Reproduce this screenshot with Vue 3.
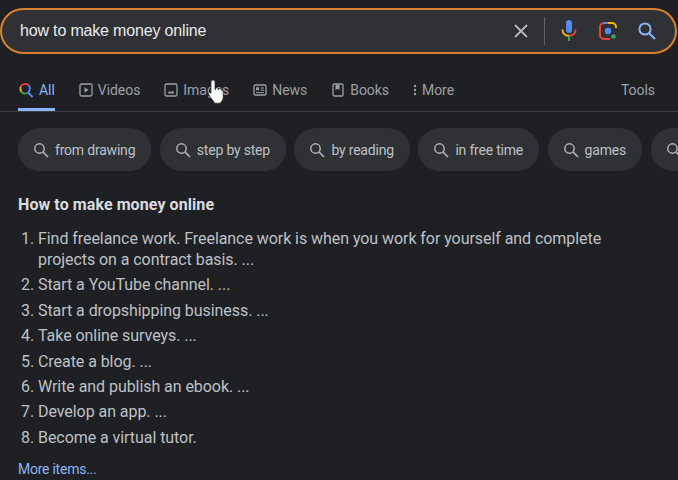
<script setup>
const tabs = [
  { label: 'Videos', icon: 'video' },
  { label: 'Images', icon: 'image' },
  { label: 'News', icon: 'news' },
  { label: 'Books', icon: 'book' }
]
const chips = ['from drawing', 'step by step', 'by reading', 'in free time', 'games']
const items = [
  'Find freelance work. Freelance work is when you work for yourself and complete projects on a contract basis. ...',
  'Start a YouTube channel. ...',
  'Start a dropshipping business. ...',
  'Take online surveys. ...',
  'Create a blog. ...',
  'Write and publish an ebook. ...',
  'Develop an app. ...',
  'Become a virtual tutor.'
]
</script>

<template>
  <div class="page">
    <header class="search">
      <span class="query">how to make money online</span>
      <svg class="clear" width="16" height="16" viewBox="0 0 16 16"><path d="M2 2l12 12M14 2L2 14" stroke="#b4b7bb" stroke-width="1.8" fill="none"/></svg>
      <span class="sep"></span>
      <svg class="mic" width="18" height="24" viewBox="0 0 18 24">
        <rect x="6" y="1" width="6" height="13" rx="3" fill="#4f8df5"/>
        <path d="M2.5 10.5c0 4 3 6.3 6.5 6.3" stroke="#f4b400" stroke-width="2" fill="none"/>
        <path d="M15.5 10.5c0 4-3 6.3-6.5 6.3" stroke="#ea4335" stroke-width="2" fill="none"/>
        <path d="M9 17v5" stroke="#34a853" stroke-width="2"/>
      </svg>
      <svg class="lens" width="20" height="20" viewBox="0 0 20 20" fill="none">
        <path d="M2 8V6a4 4 0 0 1 4-4h2" stroke="#ea4335" stroke-width="2"/>
        <path d="M8 2h6a4 4 0 0 1 4 4v1" stroke="#f4b400" stroke-width="2"/>
        <path d="M2 8v6a4 4 0 0 0 4 4h6" stroke="#ea4335" stroke-width="2"/>
        <circle cx="10" cy="10" r="3.2" fill="#4f8df5"/>
        <circle cx="15.5" cy="15.5" r="2.3" fill="#34a853"/>
        <path d="M6 2h4" stroke="#4f8df5" stroke-width="2"/>
      </svg>
      <svg class="go" width="20" height="20" viewBox="0 0 20 20" fill="none"><circle cx="8" cy="8" r="5.6" stroke="#8ab4f8" stroke-width="2"/><path d="M12.2 12.2L18 18" stroke="#8ab4f8" stroke-width="2.2"/></svg>
    </header>

    <nav class="tabs">
      <a class="tab active">
        <svg width="16" height="16" viewBox="0 0 16 16" fill="none">
          <path d="M10.5 3A5.3 5.3 0 0 0 2.5 5" stroke="#ea4335" stroke-width="1.8"/>
          <path d="M2.5 5A5.3 5.3 0 0 0 3.500 10" stroke="#f4b400" stroke-width="1.8"/>
          <path d="M3.500 10a5.300 5.300 0 0 0 6 1" stroke="#34a853" stroke-width="1.800"/>
          <path d="M9.500 11a5.300 5.300 0 0 0 1-8" stroke="#4f8df5" stroke-width="1.800"/>
          <path d="M10 10.500l4.500 4.500" stroke="#4f8df5" stroke-width="2"/>
        </svg>
        <span>All</span>
      </a>
      <a v-for="t in tabs" :key="t.label" class="tab">
        <svg v-if="t.icon === 'video'" width="14" height="14" viewBox="0 0 14 14" fill="none"><rect x="1" y="1" width="12" height="12" rx="1.500" stroke="#9aa0a6" stroke-width="1.300"/><path d="M5.500 4.300v5.400L9.500 7z" fill="#9aa0a6"/></svg>
        <svg v-else-if="t.icon === 'image'" width="14" height="14" viewBox="0 0 14 14" fill="none"><rect x="1" y="1" width="12" height="12" rx="1.500" stroke="#9aa0a6" stroke-width="1.300"/><path d="M3.500 10.500l2-2.500 1.500 1.500 1.500-2 2 3z" fill="#9aa0a6"/></svg>
        <svg v-else-if="t.icon === 'news'" width="14" height="14" viewBox="0 0 14 14" fill="none"><rect x="1" y="2" width="12" height="10" rx="1.300" stroke="#9aa0a6" stroke-width="1.300"/><rect x="3" y="4.300" width="3" height="3" fill="#9aa0a6"/><path d="M7.500 5h3.500M7.500 7.200h3.500M3 9.600h8" stroke="#9aa0a6"/></svg>
        <svg v-else width="14" height="14" viewBox="0 0 14 14" fill="none"><rect x="2" y="1" width="10" height="12" rx="1.300" stroke="#9aa0a6" stroke-width="1.300"/><path d="M4.500 1.500h4v5.500l-2-1.300-2 1.300z" fill="#9aa0a6"/></svg>
        <span>{{ t.label }}</span>
      </a>
      <a class="tab">
        <svg width="4" height="14" viewBox="0 0 4 14"><circle cx="2" cy="3" r="1.200" fill="#9aa0a6"/><circle cx="2" cy="7" r="1.200" fill="#9aa0a6"/><circle cx="2" cy="11" r="1.200" fill="#9aa0a6"/></svg>
        <span>More</span>
      </a>
      <a class="tools">Tools</a>
      <svg class="cursor" width="16" height="25" viewBox="0 0 16 25">
        <path d="M3 3a2 2 0 0 1 4 0v7.500h.6V9.700a1.400 1.400 0 0 1 2.600-.2v1.400h.5v-.6a1.300 1.300 0 0 1 2.500 0v1h.3c.9-.2 1.700.4 1.700 1.300v5.400c0 2.200-.9 3.900-2.300 5.200-.3.300-.5.600-.5 1H6.500c-.3-1.500-1.800-3-3-4.700C2.400 17.900.6 15.900.6 14.500c0-1 1.300-1.500 2.400-.3z" fill="#fff" stroke="#222" stroke-width=".7"/>
      </svg>
    </nav>

    <div class="chips">
      <div v-for="c in chips" :key="c" class="chip">
        <svg width="16" height="16" viewBox="0 0 16 16" fill="none"><circle cx="6.500" cy="6.500" r="4.700" stroke="#aeb2b7" stroke-width="1.500"/><path d="M10 10l5 5" stroke="#aeb2b7" stroke-width="1.700"/></svg>
        <span>{{ c }}</span>
      </div>
      <div class="chip tail">
        <svg width="16" height="16" viewBox="0 0 16 16" fill="none"><circle cx="6.500" cy="6.500" r="4.700" stroke="#aeb2b7" stroke-width="1.500"/><path d="M10 10l5 5" stroke="#aeb2b7" stroke-width="1.700"/></svg>
      </div>
    </div>

    <main class="answer">
      <h2>How to make money online</h2>
      <ol>
        <li v-for="i in items" :key="i">{{ i }}</li>
      </ol>
      <a class="more">More items...</a>
    </main>
  </div>
</template>

<style>
html, body { margin: 0; background: #1f2023; overflow: hidden; }
</style>

<style scoped>
.page {
  width: 678px;
  height: 480px;
  overflow: hidden;
  background: #1f2023;
  font-family: Roboto, "Liberation Sans", Arial, sans-serif;
  padding-top: 8px;
  box-sizing: border-box;
}
.search {
  height: 46px;
  margin: 0 1px 0 0;
  box-sizing: border-box;
  border: 2px solid #d9822b;
  border-radius: 23px;
  background: #303134;
  display: flex;
  align-items: center;
  padding: 0 18px 0 18px;
  color: #e8eaed;
  font-family: "Liberation Sans", Arial, sans-serif;
  font-size: 16px;
  letter-spacing: -0.17px;
}
.query { flex: 1; }
.sep { width: 1px; height: 28px; background: #5f6368; margin: 0 15px; }
.clear { display: block; }
.mic { margin-right: 20px; }
.lens { margin-right: 19px; }
.tabs {
  position: relative;
  height: 58px;
  box-sizing: border-box;
  border-bottom: 1px solid #3c4043;
  display: flex;
  align-items: stretch;
  padding: 0 23px 0 18px;
  gap: 24px;
  font-size: 14px;
  letter-spacing: -0.05px;
  color: #9aa0a6;
}
.tab {
  display: flex;
  align-items: center;
  gap: 5px;
  padding-top: 14px;
  box-sizing: border-box;
  position: relative;
}
.tab.active { color: #8ab4f8; }
.tab.active::after {
  content: "";
  position: absolute;
  left: 0; right: 0; bottom: 0;
  height: 3px;
  background: #8ab4f8;
}
.tools { margin-left: auto; display: flex; align-items: center; padding-top: 14px; }
.cursor { position: absolute; left: 208px; top: 25px; }
.chips {
  display: flex;
  gap: 8.500px;
  padding: 16px 0 0 18px;
}
.chip {
  height: 43px;
  flex: none;
  box-sizing: border-box;
  border-radius: 22px;
  background: #303134;
  display: flex;
  align-items: center;
  gap: 6px;
  padding: 0 16px 0 15px;
  color: #bdc1c6;
  font-size: 14px;
  letter-spacing: -0.2px;
}
.answer { padding: 24px 18px 0; color: #bdc1c6; }
h2 { margin: 0 0 13px; font-size: 16px; line-height: 20px; font-weight: 700; color: #dadce0; letter-spacing: 0.08px; }
ol { margin: 0; padding: 0 40px 0 20px; font-size: 16px; line-height: 21px; letter-spacing: -0.06px; }
li { margin-bottom: 4.400px; }
.more { display: block; margin-top: 11px; font-size: 14px; line-height: 20px; letter-spacing: -0.25px; color: #8ab4f8; }
</style>
